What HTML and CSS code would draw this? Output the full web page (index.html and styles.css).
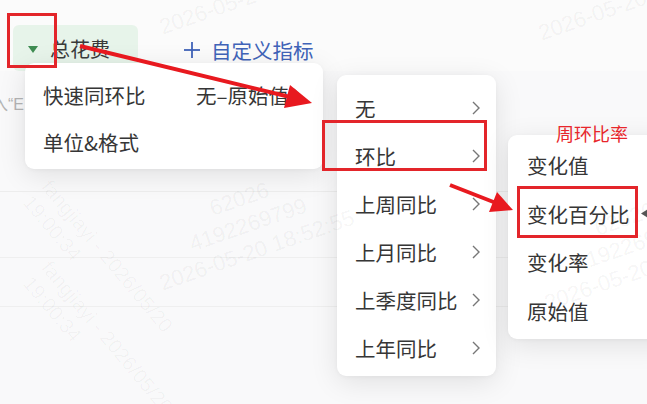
FILE: index.html
```html
<!DOCTYPE html>
<html lang="zh">
<head>
<meta charset="utf-8">
<link rel="stylesheet" href="styles.css">
</head>
<body>
<div class="page">
  <div class="toolbar">
    <div class="chip"><span class="caret"></span><span class="chip-label">总花费</span></div>
    <div class="add"><svg class="plus" viewBox="0 0 18 18"><line x1="9" y1="1" x2="9" y2="17"/><line x1="1" y1="9" x2="17" y2="9"/></svg><span>自定义指标</span></div>
  </div>
  <div class="search">入“E</div>
  <div class="table">
    <div class="row row-a"></div>
    <div class="row row-b"></div>
    <div class="row row-c"></div>
  </div>

  <div class="menu menu-1">
    <div class="item">
      <span>快速同环比</span>
      <span class="value">无–原始值<svg class="chev" viewBox="0 0 8 14"><polyline points="1,1 7,7 1,13"/></svg></span>
    </div>
    <div class="item"><span>单位&amp;格式</span></div>
  </div>

  <div class="menu menu-2">
    <div class="item"><span>无</span><svg class="chev" viewBox="0 0 8 14"><polyline points="1,1 7,7 1,13"/></svg></div>
    <div class="item"><span>环比</span><svg class="chev" viewBox="0 0 8 14"><polyline points="1,1 7,7 1,13"/></svg></div>
    <div class="item"><span>上周同比</span><svg class="chev" viewBox="0 0 8 14"><polyline points="1,1 7,7 1,13"/></svg></div>
    <div class="item"><span>上月同比</span><svg class="chev" viewBox="0 0 8 14"><polyline points="1,1 7,7 1,13"/></svg></div>
    <div class="item"><span>上季度同比</span><svg class="chev" viewBox="0 0 8 14"><polyline points="1,1 7,7 1,13"/></svg></div>
    <div class="item"><span>上年同比</span><svg class="chev" viewBox="0 0 8 14"><polyline points="1,1 7,7 1,13"/></svg></div>
  </div>

  <div class="menu menu-3">
    <div class="item"><span>变化值</span></div>
    <div class="item"><span>变化百分比</span></div>
    <div class="item"><span>变化率</span></div>
    <div class="item"><span>原始值</span></div>
  </div>

  <div class="wm wm-1">62026<br>4192269799<br>2026-05-20 18:52:55</div>
  <div class="wm wm-2">62026<br>4192269799<br>2026-05-20 18:52:55</div>
  <div class="wm wm-3">62026<br>4192269799<br>2026-05-20 18:52:55</div>
  <div class="wm wm-4">62026<br>4192269799<br>2026-05-20 18:52:55</div>
  <div class="wmd wmd-1">fangjiayi - 2026/05/20<br>19:00:34</div>
  <div class="wmd wmd-2">fangjiayi - 2026/05/20<br>19:00:34</div>

  <div class="note">周环比率</div>
  <div class="box box-1"></div>
  <div class="box box-2"></div>
  <div class="box box-3"></div>
  <svg class="pointer" viewBox="0 0 8 10"><polygon points="0,5 8,0 8,10"/></svg>

  <svg class="arrows" viewBox="0 0 647 404">
    <line x1="80" y1="46" x2="290" y2="97" />
    <polygon points="312,103 284,108 290,85" />
    <line x1="450" y1="185" x2="496" y2="203" />
    <polygon points="513,210 489,212 497,192" />
  </svg>
</div>
</body>
</html>
```

FILE: styles.css
```css
* { box-sizing: border-box; }

body {
  margin: 0;
  background: #f9f9fa;
}

.page {
  position: relative;
  width: 647px;
  height: 404px;
  overflow: hidden;
  background: #f9f9fa;
  font-family: "Noto Sans CJK SC", "Noto Sans", sans-serif;
  color: #333;
}

.toolbar {
  display: flex;
  align-items: center;
  gap: 45px;
  padding: 25px 0 0 13px;
  background: #fbfbfb;
}

.chip {
  display: flex;
  align-items: center;
  gap: 12px;
  width: 125px;
  height: 46px;
  padding: 0 0 0 15px;
  border-radius: 6px;
  background: #e7f4ea;
  font-size: 20px;
  color: #3a3a3a;
}

.caret {
  width: 0;
  height: 0;
  border-left: 5px solid transparent;
  border-right: 5px solid transparent;
  border-top: 7px solid #3f8c52;
  margin-top: 2px;
}

.add {
  display: flex;
  align-items: center;
  gap: 10px;
  font-size: 20.5px;
  color: #4063b8;
  margin-top: 3px;
}

.plus {
  width: 18px;
  height: 18px;
  stroke: #4063b8;
  stroke-width: 1.8;
}

.search {
  height: 121px;
  padding: 24px 0 0 0;
  font-family: "Liberation Sans", "Noto Sans CJK SC", sans-serif;
  font-size: 16px;
  line-height: 20px;
  color: #b4b4b4;
  border-bottom: 1px solid #ededed;
  margin-left: -8px;
}

.row { border-bottom: 1px solid #efefef; }
.row-a { height: 66px; }
.row-b { height: 49px; }
.row-c { height: 97px; border-bottom: none; }

.menu {
  position: absolute;
  background: #fff;
  border-radius: 9px;
  box-shadow: 0 6px 28px rgba(0, 0, 0, 0.1), 0 1px 4px rgba(0, 0, 0, 0.04);
}

.item {
  display: flex;
  align-items: center;
  justify-content: space-between;
  font-size: 20.5px;
  line-height: 28px;
  color: #363636;
}

.chev {
  width: 8px;
  height: 14px;
  fill: none;
  stroke: #777;
  stroke-width: 1.4;
}

.menu-1 {
  left: 25px;
  top: 63px;
  width: 298px;
  padding: 8px 0 4px;
}
.menu-1 .item {
  height: 47px;
  padding: 0 22px 0 18px;
}
.menu-1 .value {
  display: flex;
  align-items: center;
  gap: 4px;
}

.menu-2 {
  left: 337px;
  top: 75px;
  width: 159px;
  padding: 9px 0 4px;
}
.menu-2 .item {
  height: 48px;
  padding: 0 16px 0 18px;
}

.menu-3 {
  left: 508px;
  top: 135px;
  width: 170px;
  padding: 6px 0 4px;
}
.menu-3 .item {
  height: 48.5px;
  padding: 0 0 0 19px;
}

.wm {
  position: absolute;
  width: 210px;
  font-family: "Liberation Sans", sans-serif;
  font-size: 22px;
  line-height: 27px;
  text-align: center;
  color: rgba(0, 0, 0, 0.05);
  transform: rotate(-19deg);
  white-space: nowrap;
  pointer-events: none;
}
.wm-1 { left: 143px; top: 184px; }
.wm-2 { left: 143px; top: -72px; }
.wm-3 { left: 528px; top: 204px; }
.wm-4 { left: 522px; top: -66px; }

.wmd {
  position: absolute;
  font-family: "Liberation Sans", sans-serif;
  font-size: 20px;
  line-height: 24px;
  color: rgba(0, 0, 0, 0.035);
  transform: rotate(50deg);
  transform-origin: left top;
  white-space: nowrap;
  pointer-events: none;
}
.wmd-1 { left: 55px; top: 175px; }
.wmd-2 { left: 55px; top: 256px; }

.note {
  position: absolute;
  left: 556px;
  top: 121px;
  font-size: 18px;
  line-height: 24px;
  color: #e8262b;
}

.box {
  position: absolute;
  border: 3px solid #e3252a;
}
.box-1 { left: 7px; top: 13px; width: 50px; height: 55px; }
.box-2 { left: 322px; top: 120px; width: 165px; height: 51px; }
.box-3 { left: 517px; top: 186px; width: 121px; height: 52px; }

.pointer {
  position: absolute;
  left: 641px;
  top: 209px;
  width: 7px;
  height: 9px;
  fill: #555;
}

.arrows {
  position: absolute;
  left: 0;
  top: 0;
  width: 647px;
  height: 404px;
  pointer-events: none;
}
.arrows line {
  stroke: #e8191f;
  stroke-width: 4;
}
.arrows polygon {
  fill: #e8191f;
}
```
